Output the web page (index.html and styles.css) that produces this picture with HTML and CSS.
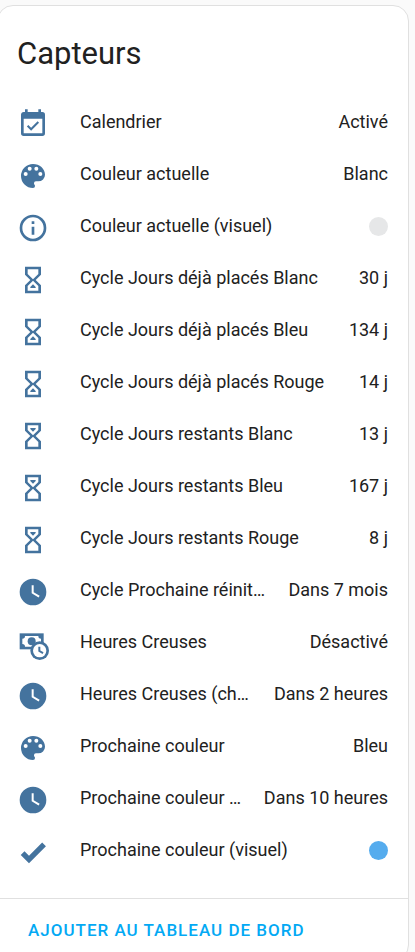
FILE: index.html
```
<!DOCTYPE html>
<html lang="fr">
<head>
  <meta charset="UTF-8">
  <meta name="viewport" content="width=device-width, initial-scale=1.0">
  <title>Capteurs</title>
  <link rel="stylesheet" href="styles.css">
</head>

<body>
  <!-- Shared icons -->
  <svg class="sprite" aria-hidden="true">
    <symbol id="calendar" viewBox="0 0 24 24"><path d="M19,19H5V8H19M19,3H18V1H16V3H8V1H6V3H5C3.89,3 3,3.9 3,5V19A2,2 0 0,0 5,21H19A2,2 0 0,0 21,19V5A2,2 0 0,0 19,3M16.53,11.06L15.47,10L10.59,14.88L8.47,12.76L7.41,13.82L10.59,17L16.53,11.06Z"/></symbol>
    <symbol id="palette" viewBox="0 0 24 24"><path d="M17.5,12A1.5,1.5 0 0,1 16,10.5A1.5,1.5 0 0,1 17.5,9A1.5,1.5 0 0,1 19,10.5A1.5,1.5 0 0,1 17.5,12M14.5,8A1.5,1.5 0 0,1 13,6.5A1.5,1.5 0 0,1 14.5,5A1.5,1.5 0 0,1 16,6.5A1.5,1.5 0 0,1 14.5,8M9.5,8A1.5,1.5 0 0,1 8,6.5A1.5,1.5 0 0,1 9.5,5A1.5,1.5 0 0,1 11,6.5A1.5,1.5 0 0,1 9.5,8M6.5,12A1.5,1.5 0 0,1 5,10.5A1.5,1.5 0 0,1 6.5,9A1.5,1.5 0 0,1 8,10.5A1.5,1.5 0 0,1 6.5,12M12,3A9,9 0 0,0 3,12A9,9 0 0,0 12,21A1.5,1.5 0 0,0 13.5,19.5C13.5,19.11 13.35,18.76 13.11,18.5C12.88,18.23 12.73,17.88 12.73,17.5A1.5,1.5 0 0,1 14.23,16H16A5,5 0 0,0 21,11C21,6.58 16.97,3 12,3Z"/></symbol>
    <symbol id="info" viewBox="0 0 24 24"><path d="M11,9H13V7H11M12,20C7.59,20 4,16.41 4,12C4,7.59 7.59,4 12,4C16.41,4 20,7.59 20,12C20,16.41 16.41,20 12,20M12,2A10,10 0 0,0 2,12A10,10 0 0,0 12,22A10,10 0 0,0 22,12A10,10 0 0,0 12,2M11,17H13V11H11V17Z"/></symbol>
    <symbol id="sand-done" viewBox="0 0 24 24"><path d="M6,2V8L10,12L6,16V22H18V16L14,12L18,8V2H6M16,16.5V20H8V16.5L12,12.5L16,16.5M12,11.5L8,7.5V4H16V7.5L12,11.5Z"/><path d="M10,18V17.2L12,15.2L14,17.2V18Z"/></symbol>
    <symbol id="sand-left" viewBox="0 0 24 24"><path d="M6,2V8L10,12L6,16V22H18V16L14,12L18,8V2H6M16,16.5V20H8V16.5L12,12.5L16,16.5M12,11.5L8,7.5V4H16V7.5L12,11.5Z"/><path d="M10,6V6.8L12,8.8L14,6.8V6Z"/></symbol>
    <symbol id="clock" viewBox="0 0 24 24"><path d="M12,2A10,10 0 0,0 2,12A10,10 0 0,0 12,22A10,10 0 0,0 22,12A10,10 0 0,0 12,2M16.2,16.2L11,13V7H12.5V12.2L17,14.9L16.2,16.2Z"/></symbol>
    <symbol id="cash-clock" viewBox="0 0 24 24"><path d="M2,4H20V16H2Z"/><path class="hole" d="M6,6H16A2,2 0 0,0 18,8V12A2,2 0 0,0 16,14H6A2,2 0 0,0 4,12V8A2,2 0 0,0 6,6Z"/><circle cx="11" cy="10" r="3"/><circle cx="17" cy="17" r="7"/><circle class="hole" cx="17" cy="17" r="5"/><path d="M16,14H17.5V16.8L19.9,18.2L19.2,19.5L16,17.7Z"/></symbol>
    <symbol id="check" viewBox="0 0 24 24"><path d="M9,20.42L2.79,14.21L5.62,11.38L9,14.77L18.88,4.88L21.71,7.71L9,20.42Z"/></symbol>
  </svg>

  <main class="card">
    <h1>Capteurs</h1>
    <ul class="entities">
      <li class="row"><svg class="icon"><use href="#calendar"/></svg><span class="name">Calendrier</span><span class="state">Activé</span></li>
      <li class="row"><svg class="icon"><use href="#palette"/></svg><span class="name">Couleur actuelle</span><span class="state">Blanc</span></li>
      <li class="row"><svg class="icon"><use href="#info"/></svg><span class="name">Couleur actuelle (visuel)</span><span class="dot white" role="img" aria-label="Blanc"></span></li>
      <li class="row"><svg class="icon"><use href="#sand-done"/></svg><span class="name">Cycle Jours déjà placés Blanc</span><span class="state">30 j</span></li>
      <li class="row"><svg class="icon"><use href="#sand-done"/></svg><span class="name">Cycle Jours déjà placés Bleu</span><span class="state">134 j</span></li>
      <li class="row"><svg class="icon"><use href="#sand-done"/></svg><span class="name">Cycle Jours déjà placés Rouge</span><span class="state">14 j</span></li>
      <li class="row"><svg class="icon"><use href="#sand-left"/></svg><span class="name">Cycle Jours restants Blanc</span><span class="state">13 j</span></li>
      <li class="row"><svg class="icon"><use href="#sand-left"/></svg><span class="name">Cycle Jours restants Bleu</span><span class="state">167 j</span></li>
      <li class="row"><svg class="icon"><use href="#sand-left"/></svg><span class="name">Cycle Jours restants Rouge</span><span class="state">8 j</span></li>
      <li class="row"><svg class="icon"><use href="#clock"/></svg><span class="name">Cycle Prochaine réinit…</span><span class="state">Dans 7 mois</span></li>
      <li class="row"><svg class="icon"><use href="#cash-clock"/></svg><span class="name">Heures Creuses</span><span class="state">Désactivé</span></li>
      <li class="row"><svg class="icon"><use href="#clock"/></svg><span class="name">Heures Creuses (ch…</span><span class="state">Dans 2 heures</span></li>
      <li class="row"><svg class="icon"><use href="#palette"/></svg><span class="name">Prochaine couleur</span><span class="state">Bleu</span></li>
      <li class="row"><svg class="icon"><use href="#clock"/></svg><span class="name">Prochaine couleur …</span><span class="state">Dans 10 heures</span></li>
      <li class="row"><svg class="icon"><use href="#check"/></svg><span class="name">Prochaine couleur (visuel)</span><span class="dot blue" role="img" aria-label="Bleu"></span></li>
    </ul>
    <div class="actions">
      <button type="button">Ajouter au tableau de bord</button>
    </div>
  </main>
</body>
</html>
```
FILE: styles.css
```
body {
  margin: 0;
  background-color: #fafafa;
  color: #212121;
  font-family: Roboto, sans-serif;
  font-size: 18px;
  line-height: 26px;
}

.sprite {
  display: none;
}

.card {
  margin: 5px 6px 5px -3px;
  background-color: #fff;
  border: 1px solid #e0e0e0;
  border-radius: 16px;
}

h1 {
  margin: 0;
  padding: 25px 19px;
  font-size: 31px;
  font-weight: 400;
  line-height: 46px;
}

.entities {
  list-style: none;
  margin: 0;
  padding: 0 20px 16px 19px;
}

.row {
  display: flex;
  align-items: center;
  height: 40px;
  margin-bottom: 12px;
}

.icon {
  flex: none;
  width: 32px;
  height: 32px;
  margin: 4px 31px 0 0;
  fill: #44739e;
}

.hole {
  fill: #fff;
}

.name {
  flex: 1;
  min-width: 0;
  overflow: hidden;
  text-overflow: ellipsis;
  white-space: nowrap;
}

.state {
  flex: none;
  margin-left: 14px;
  white-space: nowrap;
}

.dot {
  width: 19px;
  height: 19px;
  border-radius: 50%;
}

.white {
  background-color: #e6e7e8;
}

.blue {
  background-color: #55acee;
}

.actions {
  padding: 7px 10px;
  border-top: 1px solid #e0e0e0;
}

button {
  height: 47px;
  padding: 0 20px;
  background: none;
  border: none;
  border-radius: 5px;
  color: #03a9f4;
  font-family: inherit;
  font-size: 17px;
  font-weight: 500;
  letter-spacing: 1px;
  text-transform: uppercase;
  cursor: pointer;
}
```
